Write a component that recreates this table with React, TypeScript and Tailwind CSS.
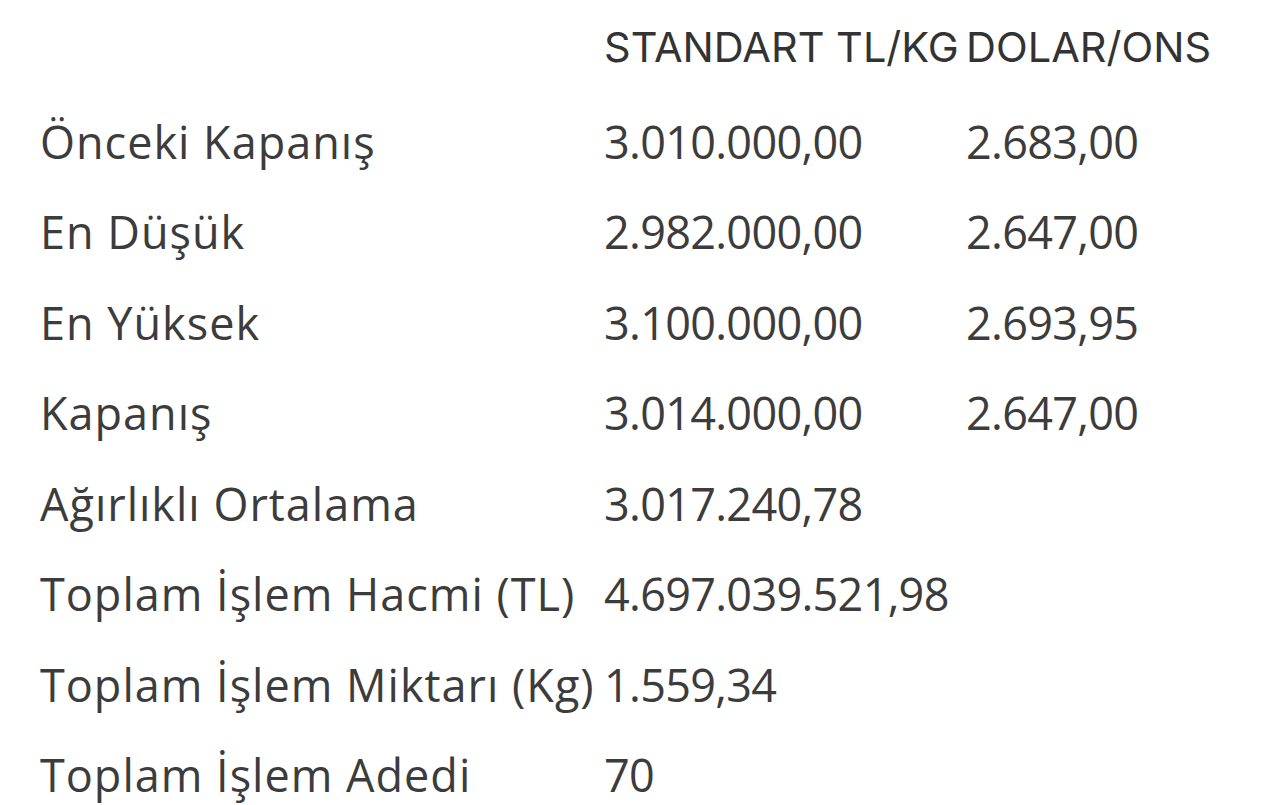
import React from "react";

const rows: [string, string, string][] = [
  ["Önceki Kapanış", "3.010.000,00", "2.683,00"],
  ["En Düşük", "2.982.000,00", "2.647,00"],
  ["En Yüksek", "3.100.000,00", "2.693,95"],
  ["Kapanış", "3.014.000,00", "2.647,00"],
  ["Ağırlıklı Ortalama", "3.017.240,78", ""],
  ["Toplam İşlem Hacmi (TL)", "4.697.039.521,98", ""],
  ["Toplam İşlem Miktarı (Kg)", "1.559,34", ""],
  ["Toplam İşlem Adedi", "70", ""],
];

export default function App() {
  return (
    <div className="w-[1280px] h-[805px] bg-white overflow-hidden">
      <table className="ml-[35px] border-collapse table-fixed w-[1240px]">
        <colgroup>
          <col className="w-[564px]" />
          <col className="w-[362px]" />
          <col />
        </colgroup>
        <thead>
          <tr className="h-[96px]">
            <th></th>
            <th className="px-[5px] text-left font-normal text-[41.5px] leading-none text-[#333] whitespace-nowrap font-['Inter',sans-serif]">
              STANDART TL/KG
            </th>
            <th className="px-[5px] text-left font-normal text-[41.5px] leading-none text-[#333] whitespace-nowrap font-['Inter',sans-serif]">
              DOLAR/ONS
            </th>
          </tr>
        </thead>
        <tbody className="text-[45px] leading-none text-[#3c3c3c] font-['Open_Sans',sans-serif]">
          {rows.map((r) => (
            <tr key={r[0]} className="h-[90.5px]">
              <td className="px-[5px] whitespace-nowrap tracking-[1px]">{r[0]}</td>
              <td className="px-[5px] whitespace-nowrap tracking-[-0.7px]">{r[1]}</td>
              <td className="px-[5px] whitespace-nowrap tracking-[-0.7px]">{r[2]}</td>
            </tr>
          ))}
        </tbody>
      </table>
    </div>
  );
}
